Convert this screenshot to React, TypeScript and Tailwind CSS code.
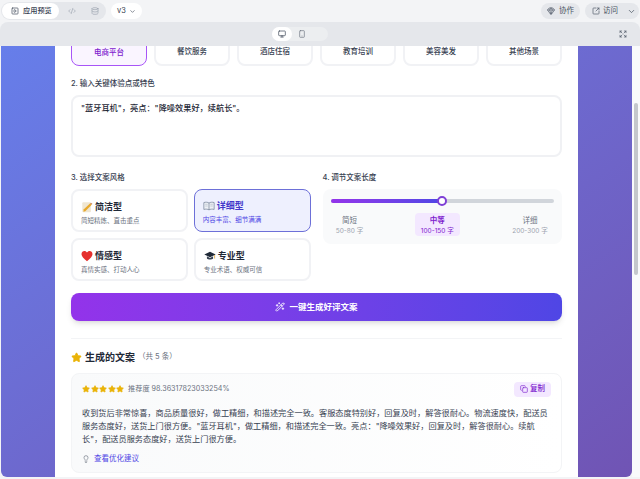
import { ChevronDown, CodeXml, Copy, Database, Expand, Gem, Lightbulb, Monitor, Smartphone, SquareArrowOutUpRight, SquarePlay, Star, WandSparkles } from "lucide-react";

const scenes = ["电商平台", "餐饮服务", "酒店住宿", "教育培训", "美容美发", "其他场景"];

function MemoIcon() {
  return (
    <svg width="12" height="12" viewBox="0 0 14 14">
      <rect x="1.5" y="1.5" width="10" height="11.5" rx="1" fill="#efe6d2" />
      <path d="M3 10 L10.5 3 L12.5 4.5 L5 12 L2.8 12.4 Z" fill="#e8a92c" />
      <path d="M10.5 3 L12.5 4.5 L13.3 3.3 L11.6 1.9 Z" fill="#c9855a" />
    </svg>
  );
}

function BookIcon() {
  return (
    <svg width="12" height="12" viewBox="0 0 14 14" fill="none">
      <path d="M1 3 C3 2.3 5.5 2.5 7 3.5 C8.5 2.5 11 2.3 13 3 V11 C11 10.4 8.5 10.6 7 11.5 C5.5 10.6 3 10.4 1 11 Z" fill="#eef1f6" stroke="#6b7a90" strokeWidth="0.8" />
      <path d="M7 3.5 V11.5" stroke="#6b7a90" strokeWidth="0.8" />
      <path d="M2.5 5 H5.5 M2.5 7 H5.5 M8.5 5 H11.5 M8.5 7 H11.5" stroke="#a3aebd" strokeWidth="0.6" />
    </svg>
  );
}

function HeartIcon() {
  return (
    <svg width="12" height="12" viewBox="0 0 14 14">
      <path d="M7 13 C3 9.8 0.6 7.6 0.6 4.7 C0.6 2.6 2.2 1.2 4 1.2 C5.2 1.2 6.4 1.9 7 3 C7.6 1.9 8.8 1.2 10 1.2 C11.8 1.2 13.4 2.6 13.4 4.7 C13.4 7.6 11 9.8 7 13 Z" fill="#e5312f" />
    </svg>
  );
}

function CapIcon() {
  return (
    <svg width="12" height="12" viewBox="0 0 14 14">
      <path d="M7 2 L13.6 5.2 L7 8.4 L0.4 5.2 Z" fill="#1f2937" />
      <path d="M3.4 7.4 V10 C4.6 11.6 9.4 11.6 10.6 10 V7.4 L7 9.2 Z" fill="#374151" />
      <path d="M12.4 5.8 V10" stroke="#d99a1c" strokeWidth="0.8" />
    </svg>
  );
}

function StyleCard({ icon, title, desc, active }: { icon: React.ReactNode; title: string; desc: string; active?: boolean }) {
  return (
    <div
      className={`h-[43px] rounded-lg px-[8px] pt-[9px] ${
        active ? "border-[1.5px] border-[#6d70d8] bg-[#eef0fe]" : "border-2 border-[#f1f2f5] bg-white"
      }`}
    >
      <div className="flex items-center gap-[2px] h-[14px]">
        {icon}
        <span className={`text-[9px] font-semibold ${active ? "text-[#4338ca]" : "text-[#1f2937]"}`}>{title}</span>
      </div>
      <div className={`mt-[2px] text-[6.5px] leading-[11px] ${active ? "text-[#4f46e5]" : "text-[#6b7280]"}`}>{desc}</div>
    </div>
  );
}

function LengthOption({ title, sub, width, active }: { title: string; sub: string; width: string; active?: boolean }) {
  return (
    <div className={`${width} h-[23px] rounded flex flex-col items-center justify-end ${active ? "bg-[#f3e8ff]" : ""}`}>
      <span className={`text-[7.5px] leading-[11px] ${active ? "font-semibold text-[#7e22ce]" : "text-[#6b7280]"}`}>{title}</span>
      <span className={`text-[6.5px] leading-[10px] whitespace-nowrap ${active ? "text-[#7e22ce]" : "text-[#9ca3af]"}`}>{sub}</span>
    </div>
  );
}

export default function App() {
  return (
    <div
      className="w-[640px] h-[479px] overflow-hidden flex flex-col bg-[#f3f4f6]"
      style={{ fontFamily: 'Inter, "Noto Sans CJK SC", sans-serif' }}
    >
      {/* top bar */}
      <div className="h-[22px] flex items-center justify-between shrink-0 pl-[1px] pr-[1px] text-[#4b5563]">
        <div className="flex items-center">
          <div className="flex items-center h-[18px] w-[105px] rounded-full bg-[#e5e7eb]">
            <div className="flex items-center gap-[4px] h-[16px] w-[57px] ml-[1px] pl-[9px] rounded-full bg-white text-[7.2px] font-medium text-[#374151]">
              <SquarePlay size={8} />
              应用预览
            </div>
            <CodeXml size={8} className="ml-[9px] text-[#9ca3af]" />
            <Database size={8} className="ml-[15px] text-[#9ca3af]" />
          </div>
          <div className="ml-[5px] flex items-center gap-[3px] h-[16px] w-[31px] pl-[6px] rounded-full bg-white text-[7.5px] text-[#374151]">
            v3
            <ChevronDown size={7} />
          </div>
        </div>
        <div className="flex items-center gap-[5px]">
          <div className="flex items-center gap-[4px] h-[16px] w-[39px] pl-[6px] rounded-full bg-[#e5e7eb] text-[7.5px]">
            <Gem size={8} />
            协作
          </div>
          <div className="flex items-center h-[16px] w-[54px] pl-[7px] rounded-full bg-[#e5e7eb] text-[7.5px]">
            <SquareArrowOutUpRight size={8} className="mr-[3px]" />
            访问
            <ChevronDown size={9} className="ml-[9px]" />
          </div>
        </div>
      </div>

      {/* preview toolbar */}
      <div className="h-[24px] shrink-0 relative flex items-center justify-center bg-[#e5e7eb] rounded-t-lg">
        <div className="flex items-center h-[14px] w-[56px] ml-[-40px] rounded-full bg-[#eceef0]">
          <div className="h-[14px] w-[20px] rounded-full bg-white flex items-center justify-center">
            <Monitor size={8} className="text-[#374151]" />
          </div>
          <Smartphone size={8} className="ml-[6px] text-[#6b7280]" />
        </div>
        <Expand size={8} className="absolute right-[13px] top-[8px] text-[#4b5563]" />
      </div>

      {/* preview */}
      <div className="h-[431px] shrink-0 flex overflow-hidden">
        <div className="ml-[1px] w-[631px] flex overflow-hidden rounded-b-md bg-gradient-to-br from-[#667eea] to-[#7054b4]">
          <div className="ml-[54px] w-[523px] bg-white overflow-hidden">
            <div className="mt-[-22px] px-[16px]">
              {/* scenes */}
              <div className="grid grid-cols-6 gap-[6.8px]">
                {scenes.map((s, i) => (
                  <div
                    key={s}
                    className={`h-[42px] rounded-lg flex items-end justify-center pb-[7px] text-[7.5px] font-medium ${
                      i === 0
                        ? "border-[1.5px] border-[#a855f7] bg-[#faf5ff] text-[#7e22ce]"
                        : "border-2 border-[#f1f2f5] bg-white text-[#374151]"
                    }`}
                  >
                    {s}
                  </div>
                ))}
              </div>

              <div className="mt-[12px] text-[7.5px] leading-[12px] font-medium text-[#374151]">2. 输入关键体验点或特色</div>
              <div className="mt-[5px] h-[62px] rounded-lg border-2 border-[#f0f1f4] px-[8px] pt-[3px] text-[8.2px] leading-[16px] font-medium text-[#1f2937]">
                "蓝牙耳机"，亮点："降噪效果好，续航长"。
              </div>

              <div className="mt-[15px] grid grid-cols-2 gap-[12px]">
                <div>
                  <div className="text-[7.5px] leading-[12px] font-medium text-[#374151]">3. 选择文案风格</div>
                  <div className="mt-[5px] grid grid-cols-2 gap-[6px]">
                    <StyleCard icon={<MemoIcon />} title="简洁型" desc="简短精炼、直击重点" />
                    <StyleCard icon={<BookIcon />} title="详细型" desc="内容丰富、细节满满" active />
                    <StyleCard icon={<HeartIcon />} title="情感型" desc="真情实感、打动人心" />
                    <StyleCard icon={<CapIcon />} title="专业型" desc="专业术语、权威可信" />
                  </div>
                </div>
                <div>
                  <div className="text-[7.5px] leading-[12px] font-medium text-[#374151]">4. 调节文案长度</div>
                  <div className="mt-[5px] h-[55px] rounded-lg bg-[#f9fafb] px-[8px] pt-[10px]">
                    <div className="relative h-[4px] rounded-full bg-[#d1d5db]">
                      <div className="h-[4px] w-[111px] rounded-full bg-gradient-to-r from-[#9333ea] to-[#4f46e5]" />
                      <div className="absolute left-[106px] top-[-3px] h-[10px] w-[10px] rounded-full border-2 border-[#7e3fd6] bg-white" />
                    </div>
                    <div className="mt-[10px] flex justify-between">
                      <LengthOption title="简短" sub="50-80 字" width="w-[38px]" />
                      <LengthOption title="中等" sub="100-150 字" width="w-[45px]" active />
                      <LengthOption title="详细" sub="200-300 字" width="w-[48px]" />
                    </div>
                  </div>
                </div>
              </div>

              <button className="mt-[12px] w-full h-[28px] rounded-lg bg-gradient-to-r from-[#9333ea] to-[#4f46e5] text-white text-[8.5px] font-semibold flex items-center justify-center gap-[4px] shadow-md">
                <WandSparkles size={10} />
                一键生成好评文案
              </button>

              <div className="mt-[17px] h-px bg-[#f3f4f6]" />

              <div className="mt-[8px] flex items-center h-[20px]">
                <Star size={11} className="text-[#eab308] fill-[#eab308]" />
                <span className="ml-[3px] text-[10px] font-semibold text-[#1f2937]">生成的文案</span>
                <span className="ml-[3px] text-[7.5px] text-[#6b7280]">（共 5 条）</span>
              </div>

              <div className="mt-[6px] h-[100px] rounded-lg border border-[#f3f4f6] bg-gradient-to-r from-[#f9fafb] to-white px-[10px] pt-[8px]">
                <div className="flex items-center justify-between h-[14px]">
                  <div className="flex items-center">
                    <div className="flex gap-[0.5px]">
                      {[0, 1, 2, 3, 4].map((i) => (
                        <Star key={i} size={8} className="text-[#eab308] fill-[#eab308]" />
                      ))}
                    </div>
                    <span className="ml-[4px] text-[7.2px] text-[#6b7280]">推荐度 98.36317823033254%</span>
                  </div>
                  <div className="flex items-center gap-[2px] h-[15px] w-[37px] pl-[6px] rounded bg-[#f3e8ff] text-[7.5px] font-medium text-[#7e22ce]">
                    <Copy size={8} />
                    复制
                  </div>
                </div>
                <p className="mt-[11px] text-[8.18px] leading-[13px] text-[#374151]">
                  收到货后非常惊喜，商品质量很好，做工精细，和描述完全一致。客服态度特别好，回复及时，解答很耐心。物流速度快，配送员服务态度好，送货上门很方便。"蓝牙耳机"，做工精细，和描述完全一致。亮点："降噪效果好，回复及时，解答很耐心。续航长"，配送员服务态度好，送货上门很方便。
                </p>
                <div className="mt-[7px] flex items-center gap-[4px] text-[7.5px] text-[#4f46e5]">
                  <Lightbulb size={8} className="text-[#6b7280]" />
                  查看优化建议
                </div>
              </div>
            </div>
          </div>
        </div>
        {/* scrollbar */}
        <div className="w-[8px] bg-[#f9fafb] pl-[2px] pt-[57px]">
          <div className="w-[4px] h-[172px] rounded-full bg-[#c4c7cc]" />
        </div>
      </div>
    </div>
  );
}
